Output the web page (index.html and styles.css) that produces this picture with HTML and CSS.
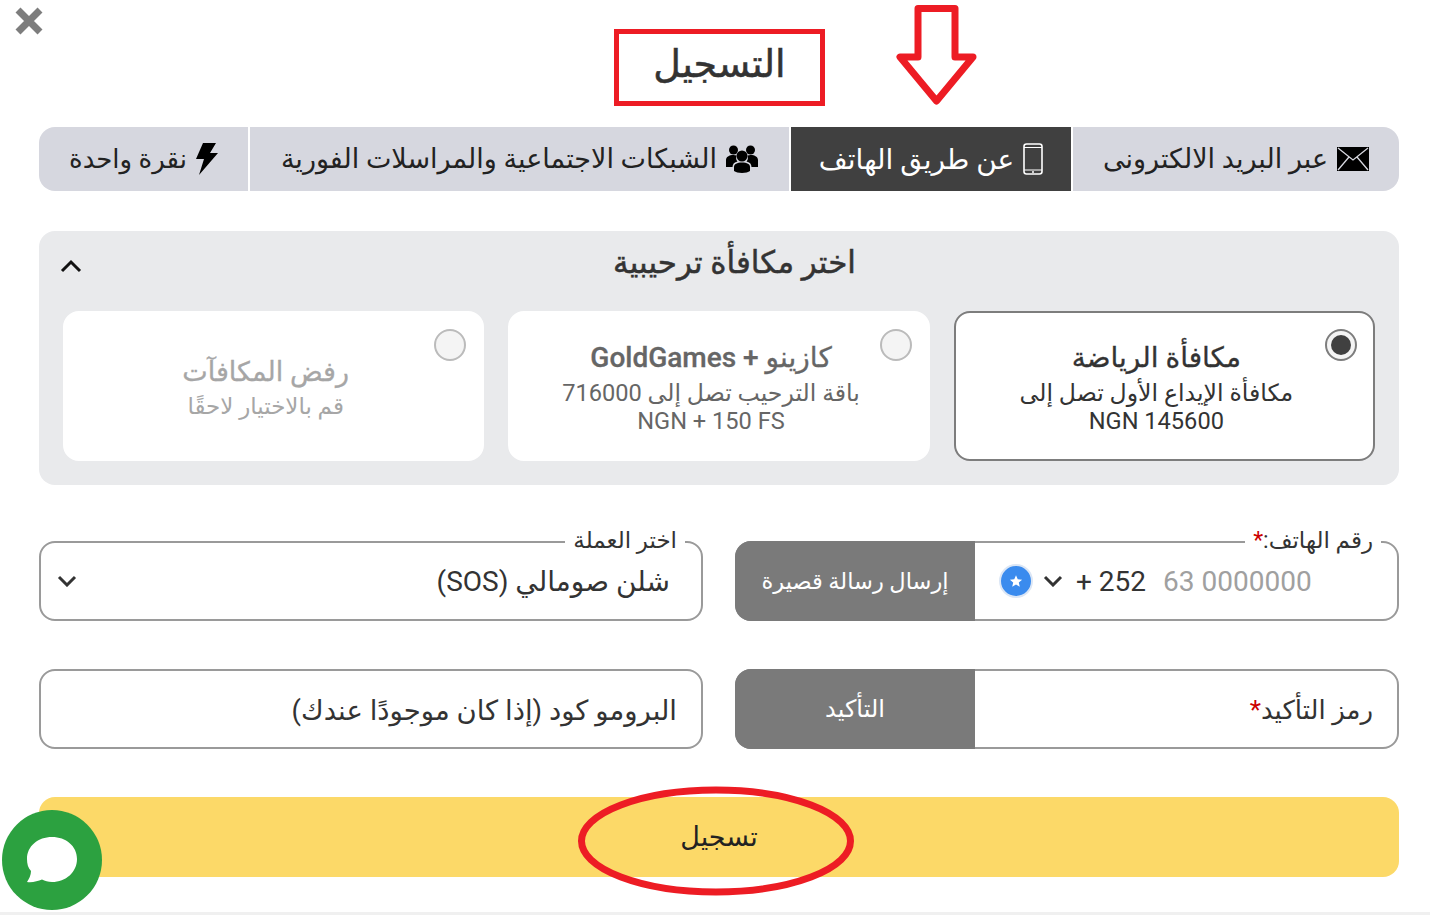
FILE: index.html
```html
<!DOCTYPE html>
<html lang="ar" dir="rtl">
<head>
  <meta charset="UTF-8">
  <title>التسجيل</title>
  <link rel="stylesheet" href="styles.css">
</head>
<body>

<svg class="close-icon" viewBox="0 0 30 30"><path d="M4 4L26 26M26 4L4 26" stroke="#7d7d7d" stroke-width="7" fill="none"/></svg>

<svg class="mark-arrow" viewBox="0 0 84 104"><path d="M24 5.500H61V54H79L42.500 98L6 54H24Z" fill="none" stroke="#ed1c24" stroke-width="7" stroke-linejoin="round"/></svg>
<svg class="mark-ellipse" viewBox="0 0 280 112"><ellipse cx="139" cy="56" rx="134.500" ry="51" fill="none" stroke="#ed1c24" stroke-width="7"/></svg>

<div class="page">
  <div class="title-row">
    <h1 class="title">التسجيل</h1>
  </div>

  <div class="tabs">
    <div class="tab tab-email">
      <svg class="tab-icon" width="32" height="24" viewBox="0 0 32 24"><path d="M0 0H32V24H0Z" fill="#000"/><path d="M1 1L16 13L31 1M1 23L12 10M31 23L20 10" fill="none" stroke="#d6d7df" stroke-width="1.300"/></svg>
      <span>عبر البريد الالكترونى</span>
    </div>
    <div class="tab tab-phone active">
      <svg class="tab-icon" width="20" height="32" viewBox="0 0 20 32"><rect x="1" y="1" width="18" height="30" rx="2.500" fill="none" stroke="#fff" stroke-width="1.600"/><path d="M1 4.500H19M1 27H19" stroke="#fff" stroke-width="1.200"/><circle cx="10" cy="29" r="1" fill="#fff"/></svg>
      <span>عن طريق الهاتف</span>
    </div>
    <div class="tab tab-social">
      <svg class="tab-icon" width="32" height="28" viewBox="0 0 32 28"><circle cx="16" cy="11" r="5.500"/><circle cx="7.500" cy="5" r="4.500"/><circle cx="24.500" cy="5" r="4.500"/><path d="M8 26V22C8 19 11 17.500 16 17.500C21 17.500 24 19 24 22V26C21 28.500 11 28.500 8 26Z"/><path d="M6.500 22H0V15C0 12 3 10 7.500 10C8.500 10 9.500 10.200 10.500 10.500C9.800 13 10 15 11.500 16.500C8.500 17 6.500 19 6.500 22ZM25.500 22H32V15C32 12 29 10 24.500 10C23.500 10 22.500 10.200 21.500 10.500C22.200 13 22 15 20.500 16.500C23.500 17 25.500 19 25.500 22Z"/></svg>
      <span>الشبكات الاجتماعية والمراسلات الفورية</span>
    </div>
    <div class="tab tab-click">
      <svg class="tab-icon" width="22" height="32" viewBox="0 0 22 32"><path d="M7 0H20L14 10H22L3 32L8 16H0Z"/></svg>
      <span>نقرة واحدة</span>
    </div>
  </div>

  <section class="bonus">
    <div class="bonus-head">
      <h2>اختر مكافأة ترحيبية</h2>
      <svg class="bonus-toggle" width="22" height="14" viewBox="0 0 22 14"><path d="M2 12L11 3L20 12" fill="none" stroke="#111" stroke-width="3"/></svg>
    </div>
    <div class="bonus-cards">
      <div class="card selected">
        <span class="radio on"></span>
        <strong>مكافأة الرياضة</strong>
        <p>مكافأة الإيداع الأول تصل إلى<br><span dir="ltr">NGN 145600</span></p>
      </div>
      <div class="card">
        <span class="radio"></span>
        <strong>كازينو + GoldGames</strong>
        <p>باقة الترحيب تصل إلى 716000<br><span dir="ltr">NGN + 150 FS</span></p>
      </div>
      <div class="card muted">
        <span class="radio"></span>
        <strong>رفض المكافآت</strong>
        <p>قم بالاختيار لاحقًا</p>
      </div>
    </div>
  </section>

  <div class="form-grid">
    <div class="field field-phone">
      <label class="float-label">رقم الهاتف:<em>*</em></label>
      <div class="phone-input">
        <span class="flag"><svg width="14" height="14" viewBox="0 0 24 24"><path d="M12 2L15 9.200L22.500 9.800L16.800 14.700L18.500 22L12 18.100L5.500 22L7.200 14.700L1.500 9.800L9 9.200Z" fill="#fff"/></svg></span>
        <svg class="chevron" width="20" height="12" viewBox="0 0 20 12"><path d="M2 2L10 10L18 2" fill="none" stroke="#333" stroke-width="3"/></svg>
        <span class="code">+ 252</span>
        <span class="placeholder">63 0000000</span>
      </div>
      <button class="side-btn">إرسال رسالة قصيرة</button>
    </div>

    <div class="field field-select">
      <label class="float-label">اختر العملة</label>
      <span class="select-value">شلن صومالي (SOS)</span>
      <svg class="chevron" width="20" height="12" viewBox="0 0 20 12"><path d="M2 2L10 10L18 2" fill="none" stroke="#333" stroke-width="3"/></svg>
    </div>

    <div class="field field-code">
      <span class="field-text">رمز التأكيد<em>*</em></span>
      <button class="side-btn confirm">التأكيد</button>
    </div>

    <div class="field field-promo">
      <span class="field-text">البرومو كود (إذا كان موجودًا عندك)</span>
    </div>
  </div>

  <button class="submit">تسجيل</button>
</div>

<div class="chat-btn">
  <svg width="52" height="48" viewBox="0 0 52 48"><path d="M26 1C40 1 51 10 51 23C51 36 40 46 26 46C22 46 19 45 16 43.500C12 45 6 47 1 46C3 43 5 39 5 35C2 32 1 28 1 23C1 10 12 1 26 1Z" fill="#fff"/></svg>
</div>

<div class="foot-line"></div>

</body>
</html>
```

FILE: styles.css
```css
html, body {
  margin: 0;
  padding: 0;
  height: 100%;
  overflow: hidden;
  background: #fff;
  font-family: Roboto, "DejaVu Sans", sans-serif;
  color: #333;
}

.page {
  width: 1360px;
  margin-right: 31px;
  display: flex;
  flex-direction: column;
}

.title-row {
  height: 127px;
  display: flex;
  justify-content: center;
  padding-top: 29px;
  box-sizing: border-box;
}

.title {
  width: 211px;
  height: 77px;
  margin: 0 0 0 1px;
  padding-bottom: 8px;
  box-sizing: border-box;
  border: 5px solid #ed1c24;
  display: flex;
  align-items: center;
  justify-content: center;
  font-size: 38px;
  font-weight: 400;
  -webkit-text-stroke: 0.5px #333;
  color: #333;
}

.tabs {
  display: flex;
  gap: 2px;
  height: 64px;
  border-radius: 16px;
  overflow: hidden;
}

.tab {
  display: flex;
  align-items: center;
  justify-content: center;
  gap: 9px;
  background: #d6d7df;
  font-size: 27px;
  color: #222;
}

.tab-email { width: 326px; }
.tab-phone { width: 280px; font-size: 28px; }
.tab-social { width: 539px; }
.tab-click { width: 209px; font-size: 26px; }

.tab.active {
  background: #404040;
  color: #fff;
}

.bonus {
  margin-top: 40px;
  height: 254px;
  box-sizing: border-box;
  background: #e9eaec;
  border-radius: 16px;
  padding: 0 24px;
}

.bonus-head {
  position: relative;
  height: 80px;
  display: flex;
  justify-content: center;
  padding: 13px 0 0 31px;
  box-sizing: border-box;
}

.bonus-head h2 {
  margin: 0;
  font-size: 31px;
  font-weight: 400;
  -webkit-text-stroke: 0.5px #333;
  color: #333;
}

.bonus-toggle {
  position: absolute;
  left: -3px;
  top: 28px;
}

.bonus-cards {
  display: grid;
  grid-template-columns: repeat(3, 1fr);
  gap: 24px;
}

.card {
  position: relative;
  height: 150px;
  box-sizing: border-box;
  padding: 3px 16px 0 0;
  background: #fff;
  border: 2px solid #fff;
  border-radius: 16px;
  display: flex;
  flex-direction: column;
  align-items: center;
  justify-content: center;
  text-align: center;
  color: #666;
}

.card.selected {
  border-color: #7d7d7d;
  color: #333;
}

.card strong {
  font-size: 28px;
  font-weight: 500;
  line-height: 36px;
  -webkit-text-stroke: 0.3px currentColor;
}

.card p {
  margin: 3px 0 0;
  font-size: 23.600px;
  line-height: 28px;
  color: inherit;
}

.card.muted {
  color: #a6a6a6;
}

.card.muted strong {
  font-size: 27px;
}

.card.muted p {
  font-size: 23px;
}

.radio {
  position: absolute;
  top: 16px;
  right: 16px;
  width: 32px;
  height: 32px;
  box-sizing: border-box;
  border: 2px solid #bbb;
  border-radius: 50%;
  background: #f4f4f4;
  display: flex;
  align-items: center;
  justify-content: center;
}

.radio.on {
  border-color: #7d7d7d;
}

.radio.on::after {
  content: "";
  width: 20px;
  height: 20px;
  border-radius: 50%;
  background: #404040;
}

.form-grid {
  margin-top: 56px;
  display: grid;
  grid-template-columns: 664px 664px;
  gap: 48px 32px;
}

.field {
  position: relative;
  height: 80px;
  box-sizing: border-box;
  border: 2px solid #9a9a9a;
  border-radius: 16px;
  display: flex;
  align-items: center;
  font-size: 28px;
  color: #333;
}

.float-label {
  position: absolute;
  top: -16px;
  right: 16px;
  padding: 0 8px;
  background: #fff;
  font-size: 23px;
  line-height: 28px;
  color: #333;
}

em {
  color: #c00;
  font-style: normal;
}

.field-phone {
  justify-content: space-between;
}

.phone-input {
  flex: 1;
  direction: ltr;
  display: flex;
  align-items: center;
  justify-content: flex-start;
  order: 1;
  padding-left: 24px;
}

.flag {
  width: 34px;
  height: 34px;
  box-sizing: border-box;
  border: 2px solid #dbe6f5;
  border-radius: 50%;
  background: #3a8bee;
  display: flex;
  align-items: center;
  justify-content: center;
}

.phone-input .chevron {
  margin-left: 10px;
}

.code {
  margin-left: 13px;
  color: #333;
}

.placeholder {
  margin-left: 17px;
  color: #a0a0a0;
}

.side-btn {
  order: 2;
  width: 240px;
  height: 80px;
  margin: -2px 0 -2px -2px;
  border: none;
  border-radius: 16px 0 0 16px;
  background: #7a7a7a;
  color: #fff;
  font-family: Roboto, "DejaVu Sans", sans-serif;
  font-size: 22.500px;
  flex: none;
}

.side-btn.confirm {
  font-size: 24px;
}

.field-select,
.field-code,
.field-promo {
  padding-right: 24px;
}

.field-select {
  justify-content: space-between;
  padding-right: 31px;
  padding-left: 16px;
}

.field-code {
  justify-content: space-between;
  font-size: 26px;
}

.field-promo {
  font-size: 27.500px;
}

.field-text {
  padding-top: 2px;
}

.chat-btn {
  position: absolute;
  left: 2px;
  top: 810px;
  width: 100px;
  height: 100px;
  border-radius: 50%;
  background: #2ca140;
  display: flex;
  align-items: center;
  justify-content: center;
}

.submit {
  margin-top: 48px;
  height: 80px;
  border: none;
  border-radius: 16px;
  background: #fcd968;
  color: #222;
  font-family: Roboto, "DejaVu Sans", sans-serif;
  font-size: 27px;
}

.close-icon {
  position: absolute;
  left: 14px;
  top: 6px;
  width: 30px;
  height: 30px;
}

.mark-arrow {
  position: absolute;
  left: 894px;
  top: 3px;
  width: 84px;
  height: 104px;
}

.mark-ellipse {
  position: absolute;
  left: 577px;
  top: 785px;
  width: 280px;
  height: 112px;
  z-index: 2;
}

.foot-line {
  position: absolute;
  left: 0;
  right: 0;
  bottom: 0;
  height: 3px;
  background: #f0f0f0;
}
```
